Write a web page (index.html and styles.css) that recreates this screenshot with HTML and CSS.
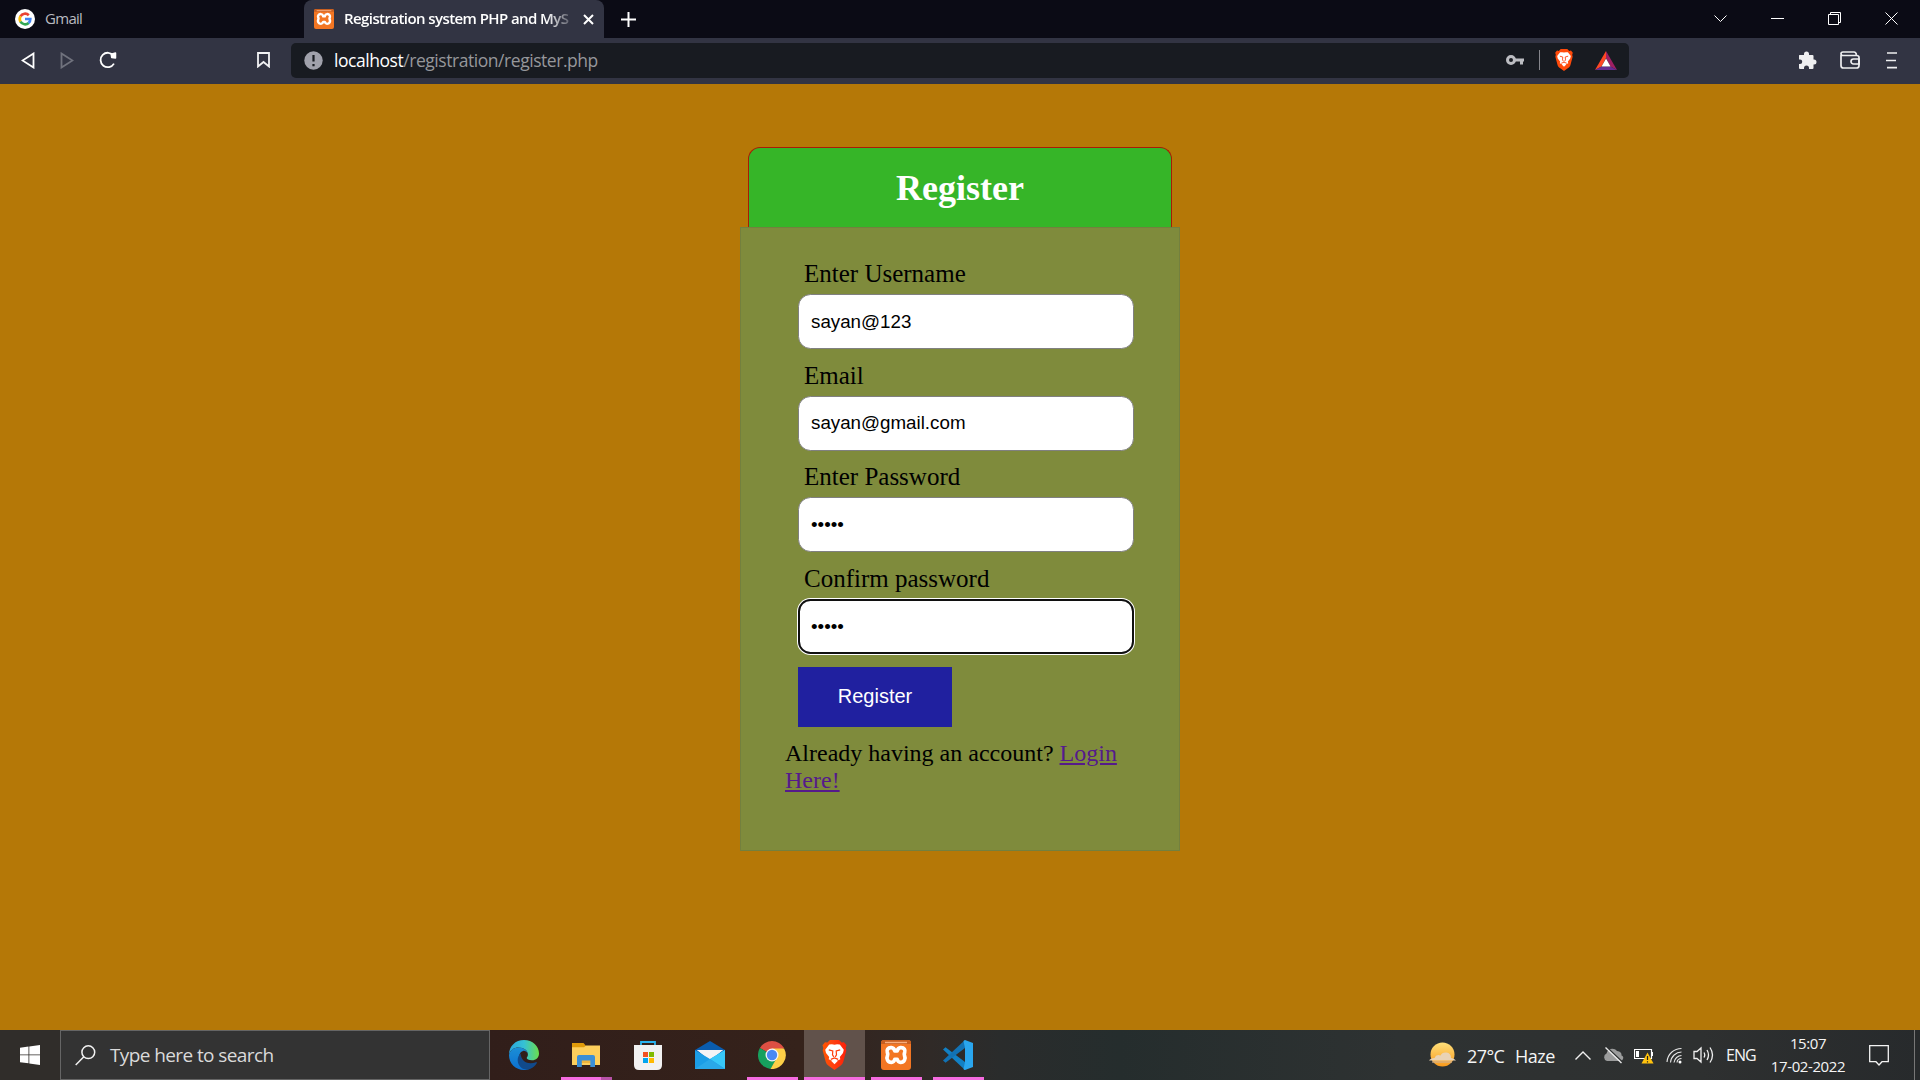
FILE: index.html
```html
<!DOCTYPE html>
<html lang="en">
<head>
<meta charset="utf-8">
<title>Registration system PHP and MySQL</title>
<link rel="stylesheet" href="styles.css">
</head>
<body>
<svg class="defs" width="0" height="0" aria-hidden="true">
  <defs>
    <linearGradient id="braveFill" x1="0" x2="1"><stop offset="0" stop-color="#ff5500"/><stop offset=".45" stop-color="#ff4010"/><stop offset="1" stop-color="#fb1f08"/></linearGradient>
    <symbol id="brave" viewBox="0 0 24 30">
      <path d="M7.500 0h9l2.600 2.600 2.400-.4L24 5.200l-.8 2.800.6 2.600-3 11.200c-.6 2-1.600 3-3.200 4.200L12 30l-5.600-4c-1.600-1.200-2.600-2.200-3.200-4.200L.2 10.600.8 8 0 5.200l2.500-3 2.400.4z"/>
      <path fill="#fff" d="M12 4.800l2.600-.5 2.700.2 4 5.200-.8 3.400-3.200 3.800.5 2.400-5.200 2.500H11.400L6.200 19.300l.5-2.400-3.200-3.800-.8-3.400 4-5.200 2.700-.2zM8.800 21l3.200-1.300 3.200 1.300L12 24.200z"/>
      <path fill="none" stroke="#ff3d0a" stroke-width="1.200" d="M6.300 9.800l4 1.100-.3 4 1.300 2M17.700 9.800l-4 1.100.3 4-1.300 2M8.300 19.400l3.700-1.400 3.700 1.400"/>
    </symbol>
    <symbol id="xampp" viewBox="0 0 30 30">
      <rect width="30" height="30" rx="3" fill="#f37623"/>
      <path d="M0 3a3 3 0 013-3h24a3 3 0 013 3v1H0z" fill="#c85f20"/><path d="M4 2.500h22" stroke="#f8ad7d" stroke-width="1.400"/>
      <path d="M10.500 7.700c-3.800-.4-5 2.700-4.200 4.700.6 1.400.9 1.800.2 3.200-1.500 3 .2 6.700 4 6.700 2.400 0 2.800-1.500 3.300-3h2.400c.5 1.500.9 3 3.300 3 3.800 0 5.500-3.700 4-6.700-.7-1.400-.4-1.800.2-3.200.8-2-.4-5.100-4.200-4.700-2.400.2-2.800 1.600-3.300 3.200h-2.400c-.5-1.600-.9-3-3.300-3.200z" fill="none" stroke="#fff" stroke-width="3.700" stroke-linejoin="round"/>
    </symbol>
  </defs>
</svg>

<header class="browser">
  <div class="tabs">
    <div class="tab">
      <svg class="tab-icon" width="20" height="20" viewBox="0 0 20 20"><circle cx="10" cy="10" r="10" fill="#fff"/><g fill="none" stroke-width="2.700"><path d="M5.500 7.400A5.300 5.300 0 0113.800 6.200" stroke="#ea4335"/><path d="M5.500 12.700a5.400 5.400 0 010-5.400" stroke="#fbbc05"/><path d="M13.700 13.900a5.300 5.300 0 01-8.200-1.300" stroke="#34a853"/><path d="M10 10h5.300a5.400 5.400 0 01-1.700 4" stroke="#4285f4"/></g></svg>
      <span class="tab-title gmail">Gmail</span>
    </div>
    <div class="tab active">
      <svg class="tab-icon" width="20" height="20"><use href="#xampp"/></svg>
      <span class="tab-title php">Registration system PHP and MyS</span>
      <svg width="11" height="11" viewBox="0 0 11 11" stroke="#fff" stroke-width="2"><path d="M1 1l9 9M10 1l-9 9"/></svg>
    </div>
    <svg class="new-tab" width="15" height="15" viewBox="0 0 15 15" stroke="#fff" stroke-width="2"><path d="M7.500 0v15M0 7.500h15"/></svg>
    <div class="window-controls">
      <svg width="13" height="13" viewBox="0 0 13 13"><path d="M.5 3.500l6 6 6-6"/></svg>
      <svg width="13" height="13" viewBox="0 0 13 13"><path d="M0 6.500h13"/></svg>
      <svg width="13" height="13" viewBox="0 0 13 13"><path d="M.5 2.500h10v10H.500zM2.500 2.500v-2h10v10h-2"/></svg>
      <svg width="13" height="13" viewBox="0 0 13 13"><path d="M.5.5l12 12M12.500.5l-12 12"/></svg>
    </div>
  </div>
  <div class="toolbar">
    <div class="nav">
      <svg width="14" height="17" viewBox="0 0 14 17"><path d="M12.500 1.500v14L1.500 8.500z"/></svg>
      <svg class="disabled" width="14" height="17" viewBox="0 0 14 17"><path d="M1.500 1.500v14l11-7z"/></svg>
      <svg width="19" height="18" viewBox="0 0 19 18"><path d="M14.500 4.600A7.200 7.200 0 1 0 15 12.600"/><path d="M12.200 3.200l4.300-1.200v5l-3.800-.6z" fill="#fff" stroke-width="1.500" stroke-linejoin="round"/></svg>
    </div>
    <svg class="bookmark" width="13" height="16" viewBox="0 0 13 16"><path d="M1 1h11v13.500l-5.500-4.500L1 14.500z"/></svg>
    <div class="address">
      <svg width="19" height="19" viewBox="0 0 19 19"><circle cx="9.500" cy="9.500" r="9.200" fill="#a0a1ab"/><path d="M9.500 4v6.500M9.500 13v2.200" stroke="#181b21" stroke-width="2.200"/></svg>
      <span class="url"><b>localhost</b>/registration/register.php</span>
      <svg class="key" width="18" height="10" viewBox="0 0 18 10"><circle cx="5" cy="5" r="3.500" fill="none" stroke="#bcbdc2" stroke-width="3"/><path d="M9 3.500h9v3h-1V9.500h-3v-3H9z" fill="#bcbdc2"/></svg>
      <i class="divider"></i>
      <svg class="shield" width="20" height="22" fill="#ff4a0a"><use href="#brave"/></svg>
      <svg class="bat" width="22" height="19" viewBox="0 0 22 19"><path d="M11 0v7l-4.500 8.500L0 19z" fill="#ff4724"/><path d="M11 0l11 19-6.500-3.500L11 7z" fill="#9e1f63"/><path d="M0 19h22l-6.500-3.500h-9z" fill="#662d91"/><path d="M11 7.500l4.500 8h-9z" fill="#fff"/></svg>
    </div>
    <div class="extensions">
      <svg width="19" height="19" viewBox="0 0 19 19"><path d="M1 4.500Q1 4 1.500 4H6V3a2.500 2.500 0 015 0v1h3.500q1 0 1 1v3.500h.5a2.500 2.500 0 010 5h-.5V17q0 1-1 1H11v-1a2.500 2.500 0 00-5 0v1H2q-1 0-1-1v-4h1a2.200 2.200 0 000-4.500H1z" fill="#efeff1"/></svg>
      <svg width="20" height="18" viewBox="0 0 20 18" fill="none" stroke="#eeeef0" stroke-width="1.700"><path d="M1 4v10.500Q1 17 3.500 17h13q2.500 0 2.500-2.500V6.500Q19 4.500 16.500 4.500H3Q1 4.500 1 2.800T3 1h11q2 0 2.500 3"/><path d="M19 8h-5.500a2.500 2.500 0 000 5H19z"/></svg>
      <svg class="menu" width="12" height="17" viewBox="0 0 12 17" stroke="#eeeef0" stroke-width="1.700"><path d="M1 1h10M0 8.500h10M1 15.700h10"/></svg>
    </div>
  </div>
</header>

<main class="page">
  <div class="header"><h2>Register</h2></div>
  <form class="card">
    <div class="group"><label>Enter Username</label><input type="text" value="sayan@123"></div>
    <div class="group"><label>Email</label><input type="text" value="sayan@gmail.com"></div>
    <div class="group"><label>Enter Password</label><input type="password" value="12345"></div>
    <div class="group"><label>Confirm password</label><input class="focused" type="password" value="12345"></div>
    <button type="button" class="btn">Register</button>
    <p>Already having an account? <a href="#">Login Here!</a></p>
  </form>
</main>

<footer class="taskbar">
  <div class="start"><svg width="20" height="20" viewBox="0 0 20 20" fill="#fff"><path d="M0 2.700l8.500-1.200v8H0zM9.300 1.400L20 0v9.500H9.300zM0 10.300h8.500v8L0 17.200zM9.300 10.300H20V20L9.300 18.400z"/></svg></div>
  <div class="search">
    <svg width="21" height="21" viewBox="0 0 21 21" fill="none" stroke="#f2f2f2" stroke-width="1.500"><circle cx="13.300" cy="7.200" r="6.400"/><path d="M8.800 11.800L.7 20"/></svg>
    <span>Type here to search</span>
  </div>
  <div class="apps">
    <div class="app"><svg width="30" height="30" viewBox="0 0 30 30">
      <defs><linearGradient id="edgeTop" x1="0" x2="1"><stop offset="0" stop-color="#2aa5dc"/><stop offset=".5" stop-color="#35c1d5"/><stop offset="1" stop-color="#6bde4c"/></linearGradient><linearGradient id="edgeLow" x1="0" x2="0" y1="0" y2="1"><stop offset="0" stop-color="#1b8fd6"/><stop offset="1" stop-color="#0c6fd0"/></linearGradient></defs>
      <path d="M0 15C0 6 6.500 0 15 0s15 6 15 13.500c0 4-3 6.800-7 6.800-3.500 0-5.300-1.300-5.300-2.200 0-.8 1.200-1.300 1.200-3.600C18.900 10.600 15 7.500 9.500 7.500 5 7.500 1 10 0 15z" fill="url(#edgeTop)"/>
      <path d="M0 15c.8-4.500 4.500-7.500 9.500-7.500 5 0 8.500 2.700 9.200 6-1.300-2.200-3-3-4.700-2.500-3 1-4.500 4-3.500 8.500.9 4.700 4.500 8.500 9.500 9.500-2 .8-3.500 1-5 1C6.500 30 0 23.500 0 15z" fill="url(#edgeLow)"/>
      <path d="M11.500 13.500c-3 3-3.800 7.500-1.500 11.500 2.500 4.500 7.500 5.500 11.500 3.700 2.700-1.200 4.800-3 6.200-5.500.4-.8-.1-1.300-.9-1-6.500 2.700-14.500.3-15.300-8.700z" fill="#114a8b"/></svg></div>
    <div class="app open grouped"><svg width="28" height="24" viewBox="0 0 28 24"><path d="M0 0h11.500l3 3.500V10H0z" fill="#e09b0a"/><path d="M0 4.200h12l2-1.700h14V22H0z" fill="#fdcf5c"/><path d="M9 16h9.500v4H9z" fill="#eeb53d"/><path d="M5 24V14q0-2 2-2h14q2 0 2 2v10h-4.700v-6.500h-8.500V24z" fill="#3b8fd6"/></svg></div>
    <div class="app"><svg width="30" height="30" viewBox="0 0 30 30"><path d="M8 6V2h14v4" fill="none" stroke="#2ab3ef" stroke-width="1.800"/><path d="M1 5h28v20q0 5-5 5H6q-5 0-5-5z" fill="#f1f1f1"/><path d="M10 12h5v5h-5z" fill="#f25022"/><path d="M16 12h5v5h-5z" fill="#7fba00"/><path d="M10 18h5v5h-5z" fill="#00a4ef"/><path d="M16 18h5v5h-5z" fill="#ffb900"/></svg></div>
    <div class="app"><svg width="30" height="28" viewBox="0 0 30 28"><path d="M0 9L15 0l15 9v8H0z" fill="#0a5cae"/><path d="M2 9h26L15 20z" fill="#f4f4f5"/><path d="M0 9l15 9L30 9v19H0z" fill="#1b9de5"/><path d="M15 18L30 9v19z" fill="#38c8f8"/><path d="M15 18l15 10H0z" fill="#2aa8e8"/><path d="M2 9h26l-13 8.500z" fill="#f4f4f5"/></svg></div>
    <div class="app open"><svg width="28" height="28" viewBox="0 0 28 28"><path d="M14 14L1.900 7A14 14 0 0126.100 7z" fill="#dd4f43"/><path d="M14 14L1.900 7A14 14 0 0012.500 28l5.500-8z" fill="#17a05e"/><path d="M12.500 28A14 14 0 0026.100 7.500H14l5 9z" fill="#fdcf47"/><circle cx="14" cy="14" r="6.500" fill="#f5f5f5"/><circle cx="14" cy="14" r="5.200" fill="#4a89f3"/></svg></div>
    <div class="app open current"><svg width="25" height="30" fill="url(#braveFill)"><use href="#brave"/></svg></div>
    <div class="app open"><svg width="30" height="30"><use href="#xampp"/></svg></div>
    <div class="app open"><svg width="30" height="30" viewBox="0 0 30 30"><path d="M0 9.500L2.500 7.300 22 22v8z" fill="#1280c4"/><path d="M0 20.500L2.500 22.700 22 8V0z" fill="#1272b4"/><path d="M22 0l8 3v24l-8 3q-1-.2-1.500-1L22 22V8l-1.500-7z" fill="#2aa6ee"/></svg></div>
  </div>
  <div class="tray">
    <svg class="sun" width="29" height="26" viewBox="0 0 29 26"><defs><linearGradient id="sunFill" x1="0" x2="0" y1="0" y2="1"><stop offset="0" stop-color="#ffe07a"/><stop offset="1" stop-color="#f99a1c"/></linearGradient></defs><circle cx="14.500" cy="12.500" r="12" fill="url(#sunFill)"/><path d="M1 18.500h27q-2-2.500-5-2.500 0-5-4.500-5.500Q14 10 12.500 13.500 8 12 6.500 16 2.500 16 1 18.500z" fill="#e9d3b5"/><path d="M4 20h20" stroke="#cfb092" stroke-width="1.200"/></svg>
    <span class="temp">27°C</span><span class="haze">Haze</span>
    <svg class="chev" width="16" height="9" viewBox="0 0 16 9" fill="none" stroke="#f0f0f0" stroke-width="1.400"><path d="M.5 8.500L8 1l7.500 7.500"/></svg>
    <svg class="cloud" width="21" height="17" viewBox="0 0 21 17"><path d="M4 14a4 4 0 01-.5-7.500C4.500 1.500 11 0 14 4q5 .5 4.500 4.500 2.500 1 1.500 3.500-.5 2-3 2z" fill="#9b9c9c"/><path d="M3.500 0l16 15" stroke="#2f3232" stroke-width="1.500"/><path d="M2.500 .5L18.500 16" stroke="#ededed" stroke-width="1.300"/></svg>
    <svg class="battery" width="20" height="17" viewBox="0 0 20 17"><path d="M.5 2.500h17v9H.500z" fill="none" stroke="#fff" stroke-width="1.200"/><path d="M2 4h3v6H2z" fill="#fff"/><path d="M18.500 5v4" stroke="#fff"/><path d="M13.500 5.500L19.500 16.500h-12z" fill="#ffc20e"/><path d="M13.500 9v4m0 1.300v1.300" stroke="#222" stroke-width="1.200"/></svg>
    <svg class="wifi" width="17" height="17" viewBox="0 0 17 17" fill="none" stroke="#e7e7e7" stroke-width="1.100"><path d="M1 15C1.500 7 8 1.500 15.500 1.500M4.500 15.500C5 9.500 10 5 15.500 5M8 15.500c.5-4 4-7 7.500-7M11 15.500c.2-2.500 2-4 4.500-4" /><circle cx="14" cy="15" r="1.500" fill="#fff" stroke="none"/></svg>
    <svg class="speaker" width="21" height="18" viewBox="0 0 21 18" fill="none" stroke="#f0f0f0" stroke-width="1.300"><path d="M1 5.500h3l4-3.500v14l-4-3.500H1zM11 6.500q1.500 2.500 0 5M14 4q3 5 0 10M17 1.500q5 7.500 0 15"/></svg>
    <span class="lang">ENG</span>
    <div class="clock"><span class="time">15:07</span><span class="date">17-02-2022</span></div>
    <svg class="notice" width="20" height="21" viewBox="0 0 20 21" fill="none" stroke="#f3f3f3" stroke-width="1.300"><path d="M.7.7h18.600v16H13L10 20l-3-3.300H.7z"/></svg>
  </div>
</footer>
</body>
</html>
```
FILE: styles.css
```css
* { box-sizing: border-box; }

body {
  margin: 0;
  width: 1920px;
  height: 1080px;
  display: flex;
  flex-direction: column;
  overflow: hidden;
  background: #b57807;
  font-family: "Open Sans", "Noto Sans", sans-serif;
}

svg { display: block; flex: none; }
.defs { position: absolute; }
span { white-space: nowrap; }

/* Browser chrome */
.browser { height: 84px; background: #323443; }

.tabs {
  display: flex;
  align-items: center;
  height: 38px;
  background: #0b0b15;
}

.tab {
  display: flex;
  align-items: center;
  width: 304px;
  height: 38px;
  padding-left: 15px;
  color: #b9bac0;
  font-size: 15px;
}

.tab.active {
  width: 300px;
  padding-left: 10px;
  border-radius: 8px 8px 0 0;
  background: #323443;
  color: #fff;
  font-weight: 600;
}

.tab-title { margin-left: 10px; padding-bottom: 2px; line-height: 20px; }
.gmail { letter-spacing: -0.7px; }
.php {
  width: 230px;
  margin: 0 9px 0 10px;
  letter-spacing: -0.580px;
  -webkit-mask-image: linear-gradient(to right, #000 88%, transparent 101%);
  mask-image: linear-gradient(to right, #000 88%, transparent 101%);
}
.new-tab { margin-left: 17px; }

.window-controls {
  display: flex;
  gap: 44px;
  margin-left: auto;
  margin-right: 22px;
  padding-bottom: 1px;
  fill: none;
  stroke: #fff;
  stroke-width: 1;
}

.toolbar { display: flex; align-items: center; height: 46px; padding-bottom: 2px; }
.nav {
  display: flex;
  align-items: center;
  gap: 25px;
  width: 257px;
  padding-left: 21px;
  fill: none;
  stroke: #fff;
  stroke-width: 1.800;
}
.nav .disabled { stroke: #70727d; }
.bookmark { fill: none; stroke: #f2f2f4; stroke-width: 1.800; }

.address {
  display: flex;
  align-items: center;
  width: 1338px;
  height: 35px;
  margin-left: 21px;
  padding-left: 13px;
  border-radius: 5px;
  background: #181b21;
}
.url { margin-left: 11px; color: #96979b; font-size: 17.500px; letter-spacing: -0.450px; }
.url b { color: #fff; font-weight: 400; }
.key { margin-left: auto; }
.divider { width: 1px; height: 20px; margin-left: 15px; background: #85868c; }
.shield { margin-left: 14px; }
.bat { margin: 0 12px 0 21px; }
.extensions { display: flex; align-items: center; gap: 23px; margin-left: 169px; }
.menu { margin-left: 3px; }

/* Registration page */
.page { height: 946px; padding-top: 63px; font-family: "Liberation Serif", serif; font-size: 24px; }

.header {
  width: 424px;
  height: 80px;
  margin: 0 auto;
  border: 1px solid #a81c08;
  border-bottom: 0;
  border-radius: 12px 12px 0 0;
  background: #36b528;
  color: #fff;
  text-align: center;
}
.header h2 { margin: 0; padding-top: 20px; font-size: 36px; line-height: 41px; }

.card {
  width: 440px;
  height: 624px;
  margin: 0 auto;
  padding: 32px 44px 0;
  border: 1px solid #73803e;
  background: #7f8b3c;
}

.group { height: 101.700px; padding-left: 13px; }
.group label {
  display: block;
  height: 34px;
  padding-left: 6px;
  font-size: 25px;
  line-height: 28px;
}
.group input {
  display: block;
  width: 336px;
  height: 55px;
  padding: 0 12px;
  border: 1px solid #808080;
  border-radius: 12.500px;
  background: #fff;
  color: #000;
  font: 18.750px "Liberation Sans", sans-serif;
}
.group input.focused {
  border: 2px solid #101010;
  padding: 0 11px;
  box-shadow: 0 0 0 1px #fff;
}

.btn {
  display: block;
  width: 154px;
  height: 60px;
  margin-left: 13px;
  border: 0;
  background: #20209f;
  color: #fff;
  font: 20px "Liberation Sans", sans-serif;
}
.card p { margin: 13px 0 0; line-height: 27px; }
.card a { color: #551a8b; }

/* Taskbar */
.taskbar {
  display: flex;
  height: 50px;
  color: #f5f5f5;
  background: linear-gradient(to right, #302d2a 0, #302d2a 60px, #311e1a 490px, #35221b 800px, #302a27 930px, #2a2c2c 1000px, #252d2d 1120px, #2e3232 1400px, #2e3030 1700px, #272a2c 1920px);
}
.start { display: grid; place-items: center; width: 60px; }
.search {
  display: flex;
  align-items: center;
  width: 430px;
  padding-left: 14px;
  border: 1px solid #656565;
  background: #333;
  color: #dadada;
  font-size: 19px;
}
.search span { margin-left: 14px; letter-spacing: -0.6px; }

.apps { display: flex; gap: 11px; margin-left: 9px; }
.app {
  display: grid;
  place-items: center;
  width: 51px;
  height: 50px;
  border-bottom: 3px solid transparent;
  padding: 3px 1px 0 0;
}
.app.open { border-bottom-color: #f56be0; }
.app.grouped {
  border-bottom: 0;
  padding-bottom: 3px;
  background: linear-gradient(to right, #f56be0 40px, #b752a7 40px) bottom / 100% 3px no-repeat;
}
.app.current { width: 61px; margin: 0 -5px; background: #61524b; }

.tray {
  display: flex;
  align-items: center;
  margin-left: auto;
  margin-right: 5px;
  padding-right: 25px;
  border-right: 1px solid #777;
  font-size: 18px;
}
.sun { margin-right: 10px; }
.temp { width: 48px; padding-top: 2px; letter-spacing: -0.6px; }
.haze { width: 60px; padding-top: 2px; letter-spacing: -0.5px; }
.cloud { margin-left: 12px; }
.battery { margin-left: 10px; }
.wifi { margin-left: 12px; }
.speaker { margin-left: 10px; }
.lang { width: 42px; margin-left: 12px; font-size: 16px; letter-spacing: -1px; }
.clock {
  display: flex;
  flex-direction: column;
  align-items: center;
  width: 80px;
  font-size: 15px;
  line-height: 23px;
  letter-spacing: -0.4px;
}
.notice { margin-left: 21px; }
```
